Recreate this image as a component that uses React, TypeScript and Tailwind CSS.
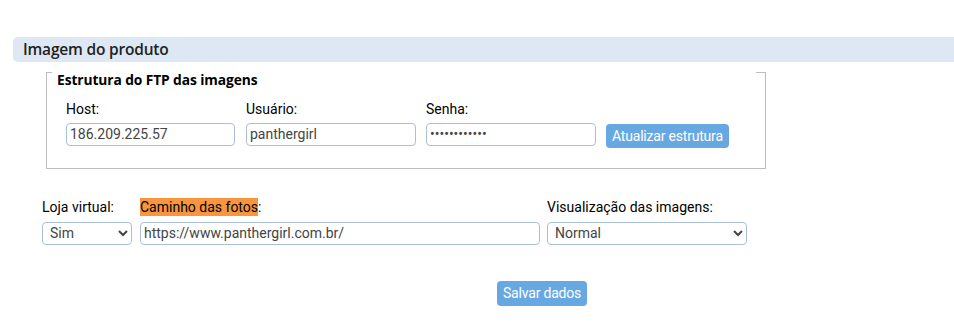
import React from "react";

const field =
  "h-[23px] rounded-[4px] border border-[#a9c1d8] bg-white px-[3px] text-[14px] text-[#444] outline-none";

function Label({ children }: { children: React.ReactNode }) {
  return <div className="mb-[4px] text-[14px] leading-[17px] text-black">{children}</div>;
}

export default function App() {
  return (
    <div className="min-h-screen bg-white pt-[37px] font-['Roboto',sans-serif]">
      {/* section header */}
      <div className="ml-[13px] flex h-[25px] items-center rounded-l-[5px] bg-[#dde8f4] pl-[10px]">
        <span className="text-[15.5px] font-semibold text-[#222] font-['Open_Sans',sans-serif] tracking-[-0.2px]">
          Imagem do produto
        </span>
      </div>

      {/* FTP box */}
      <div className="ml-[46px] mt-[10px] w-[720px]">
        <div className="flex">
          <div className="w-[6px] border-t border-[#bdbdbd]" />
          <div className="flex-1" />
          <div className="w-[10px] border-t border-[#bdbdbd]" />
        </div>
        <div className="h-[97px] border-x border-b border-[#bdbdbd] pl-[10px]">
          <div className="mt-[-1px] text-[13.8px] font-bold leading-[16px] text-black font-['Open_Sans',sans-serif] tracking-[-0.1px]">
            Estrutura do FTP das imagens
          </div>
          <div className="mt-[13px] flex items-end pl-[9px]">
            <div className="w-[180px]">
              <Label>Host:</Label>
              <input className={`${field} w-[169px]`} defaultValue="186.209.225.57" />
            </div>
            <div className="w-[180px]">
              <Label>Usuário:</Label>
              <input className={`${field} w-[170px]`} defaultValue="panthergirl" />
            </div>
            <div className="w-[180px]">
              <Label>Senha:</Label>
              <input
                type="password"
                className={`${field} w-[170px]`}
                defaultValue="123456789012"
              />
            </div>
            <button className="mb-[-2px] h-[24px] rounded-[4px] bg-[#67a8e3] px-[6px] text-[14px] tracking-[-0.2px] text-white">
              Atualizar estrutura
            </button>
          </div>
        </div>
      </div>

      {/* bottom row */}
      <div className="ml-[42px] mt-[30px] flex items-end">
        <div className="w-[98px]">
          <div className="mb-[5px] text-[14px] leading-[17px] text-black">Loja virtual:</div>
          <select className={`${field} w-[90px] px-[1px]`} defaultValue="Sim">
            <option>Sim</option>
            <option>Não</option>
          </select>
        </div>
        <div className="w-[407px]">
          <div className="mb-[5px] text-[14px] leading-[17px] text-black">
            <span className="bg-[#f9953c] py-[1px]">Caminho das fotos</span>:
          </div>
          <input
            className={`${field} w-[400px]`}
            defaultValue="https://www.panthergirl.com.br/"
          />
        </div>
        <div>
          <div className="mb-[5px] text-[14px] leading-[17px] text-black">Visualização das imagens:</div>
          <select className={`${field} w-[200px] px-[1px]`} defaultValue="Normal">
            <option>Normal</option>
            <option>Ampliada</option>
          </select>
        </div>
      </div>

      <div className="ml-[497px] mt-[36px] flex">
        <button className="h-[25px] rounded-[4px] bg-[#67a8e3] px-[6px] text-[14px] tracking-[-0.2px] text-white">
          Salvar dados
        </button>
      </div>
    </div>
  );
}
